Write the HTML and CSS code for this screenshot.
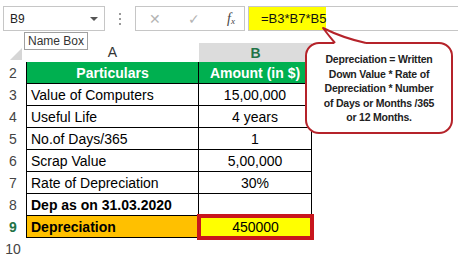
FILE: index.html
```html
<!DOCTYPE html>
<html lang="en">
<head>
    <meta charset="UTF-8">
    <title>Depreciation</title>
    <link rel="stylesheet" href="styles.css">
</head>
<body>
    <!-- Formula bar -->
    <div class="toolbar">
        <div class="name-box">
            <span>B9</span>
            <span class="drop"></span>
        </div>
        <div class="dots"><i></i><i></i><i></i></div>
        <div class="fx-box">
            <span class="cancel">&#x2715;</span>
            <span class="enter">&#x2713;</span>
            <span class="fx">f<sub>x</sub></span>
        </div>
        <div class="formula">
            <span class="formula-text">=B3*B7*B5</span>
        </div>
    </div>

    <!-- Sheet grid -->
    <div class="grid">
        <div class="corner"><span></span></div>
        <div class="col-head">A</div>
        <div class="col-head selected">B</div>
        <div class="fill"></div>

        <div class="rh">2</div>
        <div class="ca head">Particulars</div>
        <div class="cb head">Amount (in $)</div>
        <div class="fill"></div>

        <div class="rh">3</div>
        <div class="ca">Value of Computers</div>
        <div class="cb">15,00,000</div>
        <div class="fill"></div>

        <div class="rh">4</div>
        <div class="ca">Useful Life</div>
        <div class="cb">4 years</div>
        <div class="fill"></div>

        <div class="rh">5</div>
        <div class="ca">No.of Days/365</div>
        <div class="cb">1</div>
        <div class="fill"></div>

        <div class="rh">6</div>
        <div class="ca">Scrap Value</div>
        <div class="cb">5,00,000</div>
        <div class="fill"></div>

        <div class="rh">7</div>
        <div class="ca">Rate of Depreciation</div>
        <div class="cb">30%</div>
        <div class="fill"></div>

        <div class="rh">8</div>
        <div class="ca bold">Dep as on 31.03.2020</div>
        <div class="cb"></div>
        <div class="fill"></div>

        <div class="rh active">9</div>
        <div class="ca bold orange">Depreciation</div>
        <div class="cb picked">450000</div>
        <div class="fill"></div>

        <div class="rh">10</div>
        <div class="blank"></div>
        <div class="blank"></div>
        <div class="fill"></div>
    </div>

    <!-- Tooltip over the sheet -->
    <div class="tooltip">Name Box</div>

    <!-- Callout -->
    <div class="callout">
        Depreciation = Written<br>
        Down Value * Rate of<br>
        Depreciation * Number<br>
        of Days or Months /365<br>
        or 12 Months.
    </div>
    <svg class="pointer" width="50" height="22" viewBox="0 0 50 22">
        <path d="M2 2 L14 17.5 L45 17.5 Z" fill="#fff"/>
        <rect x="13" y="15" width="32" height="5" fill="#fff"/>
        <path d="M14 17 Q8 10 2 2 Q22 12 45 17" fill="none" stroke="#b5232a" stroke-width="2" stroke-linejoin="round"/>
    </svg>
</body>
</html>
```

FILE: styles.css
```css
/* Page */
body {
    margin: 0;
    font-family: "Liberation Sans", Arial, sans-serif;
    background: #ffffff;
    color: #000;
    width: 458px;
    height: 258px;
    overflow: hidden;
    position: relative;
}

/* Formula bar */
.toolbar {
    display: flex;
    align-items: flex-start;
    height: 42px;
    padding: 6px 0 0 3px;
    box-sizing: border-box;
}

.name-box {
    width: 102px;
    height: 25px;
    border: 1px solid #c6c6c6;
    box-sizing: border-box;
    display: flex;
    align-items: center;
    justify-content: space-between;
    padding: 0 6px 0 6px;
    font-size: 12px;
    color: #222;
}

.drop {
    width: 0;
    height: 0;
    border-left: 4px solid transparent;
    border-right: 4px solid transparent;
    border-top: 4px solid #555;
}

.dots {
    width: 30px;
    height: 25px;
    display: flex;
    flex-direction: column;
    align-items: center;
    justify-content: center;
    gap: 3px;
}

.dots i {
    width: 2px;
    height: 2px;
    background: #9a9a9a;
}

.fx-box {
    width: 110px;
    height: 25px;
    border: 1px solid #c6c6c6;
    box-sizing: border-box;
    display: flex;
    align-items: center;
    padding-left: 13px;
}

.cancel,
.enter {
    color: #b4b4b4;
    font-size: 14px;
    width: 39px;
}

.fx {
    font-family: "Liberation Serif", serif;
    font-style: italic;
    font-size: 14px;
    color: #444;
}

.fx sub {
    font-size: 9px;
    vertical-align: -1px;
}

.formula {
    flex: 1;
    height: 25px;
    margin-left: 3px;
    border: 1px solid #c6c6c6;
    border-right: none;
    box-sizing: border-box;
    display: flex;
}

.formula-text {
    background: #ffff00;
    width: 77px;
    font-size: 13px;
    line-height: 23px;
    padding-left: 12px;
    box-sizing: border-box;
    color: #111;
}

/* Sheet */
.grid {
    display: grid;
    grid-template-columns: 26px 173px 113px 1fr;
    grid-template-rows: 20px;
    grid-auto-rows: 22px;
    font-size: 14px;
}

.grid > div {
    box-sizing: border-box;
    display: flex;
    align-items: center;
}

.corner span {
    width: 0;
    height: 0;
    border-left: 12px solid transparent;
    border-bottom: 12px solid #d6d6d6;
    margin: 4px 0 0 10px;
}

.col-head {
    justify-content: center;
    color: #333;
}

.col-head.selected {
    background: #dcdcdc;
    color: #217346;
    font-weight: bold;
    margin-top: 1px;
}

.rh {
    justify-content: center;
    color: #444;
}

.rh.active {
    color: #217346;
    font-weight: bold;
}

.ca,
.cb {
    border-right: 1px solid #000;
    border-bottom: 1px solid #000;
    padding: 0 4px;
}

.ca {
    border-left: 1px solid #000;
}

.cb {
    justify-content: center;
}

.head {
    background: #00b050;
    color: #fff;
    font-weight: bold;
    justify-content: center;
}

.bold {
    font-weight: bold;
}

.orange {
    background: #ffc000;
}

.picked {
    background: #ffff00;
    border: none;
    box-shadow: 0 0 0 2px #c8161d, inset 0 0 0 2px #c8161d;
}

/* Name Box tooltip */
.tooltip {
    position: absolute;
    left: 24px;
    top: 32px;
    height: 18px;
    padding: 0 3px;
    border: 1px solid #a0a0a0;
    background: #fff;
    font-size: 12px;
    line-height: 17px;
    color: #333;
    box-sizing: border-box;
}

/* Callout bubble */
.callout {
    position: absolute;
    left: 305px;
    top: 42px;
    width: 148px;
    height: 92px;
    border: 2px solid #b5232a;
    border-radius: 14px;
    background: #fff;
    box-sizing: border-box;
    padding: 8px 0 0;
    text-align: center;
    font-size: 10.5px;
    line-height: 14.6px;
    font-weight: bold;
    color: #222;
    letter-spacing: -0.2px;
}

.pointer {
    position: absolute;
    left: 321px;
    top: 26px;
}
```
